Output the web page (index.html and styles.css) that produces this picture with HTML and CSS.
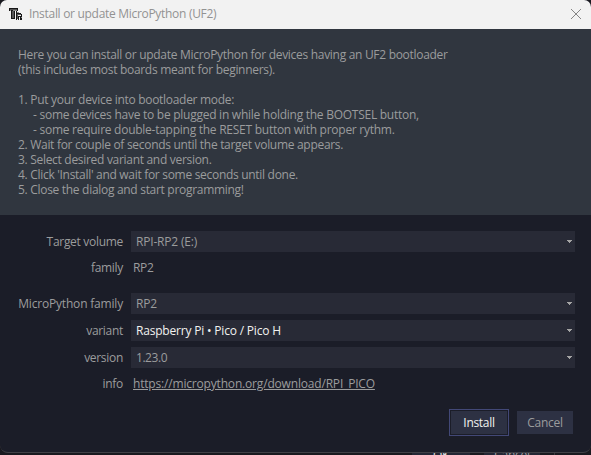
FILE: index.html
```html
<!DOCTYPE html>
<html lang="en">
<head>
<meta charset="utf-8">
<title>Install or update MicroPython (UF2)</title>
<link rel="stylesheet" href="styles.css">
</head>
<body>
<div class="behind">
  <div class="behind-button behind-ok">OK</div>
  <div class="behind-button">Cancel</div>
  <div class="behind-edge"></div>
</div>
<main class="dialog">
  <header class="titlebar">
    <svg class="logo" viewBox="0 0 14 14" shape-rendering="crispEdges">
      <path fill="#8d8d8d" d="M1 3h8v1H1zM5 3h1v9H5zM8 5h2v2H8zM9 9h2v1H9zM12 10h1v1h-1z"/>
      <path fill="#171717" d="M0 1h9v1H0zM0 2h1v2H0zM8 2h1v2H8zM2 3h1v9H2zM3 3h1v1H3zM2 11h4v1H2zM5 4h1v8H5zM7 4h1v9H7zM8 6h4v1H8zM12 7h1v3h-1zM9 9h3v1H9zM9 10h1v3H9zM11 10h1v3h-1zM12 11h1v2h-1z"/>
      <path fill="#555" d="M1 2h7v1H1zM3 4h2v7H3zM8 7h1v5H8zM9 7h3v1H9z"/>
    </svg>
    <h1 class="title">Install or update MicroPython (UF2)</h1>
    <svg class="close" viewBox="0 0 12 12"><path d="M1 1l10 10M11 1L1 11" stroke="#858585" fill="none"/></svg>
  </header>
  <section class="intro">
    <p>Here you can install or update MicroPython for devices having an UF2 bootloader</p>
    <p>(this includes most boards meant for beginners).</p>
    <p class="gap"></p>
    <p>1. Put your device into bootloader mode:</p>
    <p class="sub">- some devices have to be plugged in while holding the BOOTSEL button,</p>
    <p class="sub">- some require double-tapping the RESET button with proper rythm.</p>
    <p>2. Wait for couple of seconds until the target volume appears.</p>
    <p>3. Select desired variant and version.</p>
    <p>4. Click 'Install' and wait for some seconds until done.</p>
    <p>5. Close the dialog and start programming!</p>
  </section>
  <section class="form">
    <label>Target volume</label>
    <div class="select"><span>RPI-RP2 (E:)</span><svg class="arrow" viewBox="0 0 5 3" shape-rendering="crispEdges"><path d="M0 0h5v1H0zM1 1h3v1H1zM2 2h1v1H2z"/></svg></div>
    <label class="plain">family</label>
    <div class="value">RP2</div>
    <label class="wide">MicroPython family</label>
    <div class="select"><span>RP2</span><svg class="arrow" viewBox="0 0 5 3" shape-rendering="crispEdges"><path d="M0 0h5v1H0zM1 1h3v1H1zM2 2h1v1H2z"/></svg></div>
    <label>variant</label>
    <div class="select active"><span>Raspberry Pi • Pico / Pico H</span><svg class="arrow" viewBox="0 0 5 3" shape-rendering="crispEdges"><path d="M0 0h5v1H0zM1 1h3v1H1zM2 2h1v1H2z"/></svg></div>
    <label>version</label>
    <div class="select"><span class="number">1.23.0</span><svg class="arrow" viewBox="0 0 5 3" shape-rendering="crispEdges"><path d="M0 0h5v1H0zM1 1h3v1H1zM2 2h1v1H2z"/></svg></div>
    <label class="plain">info</label>
    <div class="value"><a class="link">https://micropython.org/download/RPI_PICO</a></div>
  </section>
  <footer class="actions">
    <button class="button primary">Install</button>
    <button class="button">Cancel</button>
  </footer>
</main>
</body>
</html>
```

FILE: styles.css
```css
* { box-sizing: border-box; }
body {
  margin: 0;
  width: 591px;
  height: 455px;
  overflow: hidden;
  position: relative;
  background: #19191f;
  color: #9b9c9d;
  font: 12px/15px "Open Sans", "Noto Sans", sans-serif;
  letter-spacing: -0.3px;
}
h1, p { margin: 0; font: inherit; white-space: nowrap; }
.dialog {
  position: relative;
  width: 591px;
  height: 453px;
  display: flex;
  flex-direction: column;
  background: #1b1d28;
  border-bottom: 1px solid #404046;
  border-radius: 7px 7px 8px 8px;
  overflow: hidden;
}
.titlebar {
  height: 29px;
  flex: none;
  display: flex;
  align-items: center;
  padding: 0 9px 2px;
  background: #f2f2f2;
  color: #929292;
}
.logo { width: 14px; height: 14px; }
.title { flex: 1; margin-left: 6px; }
.close { width: 12px; height: 12px; }
.intro {
  height: 186px;
  flex: none;
  padding: 18px 18px 0;
  background: #30363f;
}
.gap { height: 15px; }
.sub { padding-left: 15px; letter-spacing: -0.26px; }
.form {
  display: grid;
  grid-template-columns: 107px 444px;
  grid-template-rows: 21px 21px 29px 21px 21px 21px;
  gap: 6px 8px;
  padding: 16px 0 0 16px;
  align-items: center;
}
.form label { text-align: right; white-space: nowrap; }
.form .wide { letter-spacing: -0.19px; }
.form .wide, .form .wide + .select { margin-top: 8px; }
.select {
  height: 21px;
  display: flex;
  align-items: center;
  justify-content: space-between;
  padding: 0 3px 0 5px;
  background: #282a36;
  letter-spacing: -0.19px;
}
.number { letter-spacing: -0.45px; }
.active { color: #f2f2f0; }
.arrow { width: 5px; height: 3px; fill: #a4a4a4; }
.form .plain, .value { padding-bottom: 2px; }
.value { padding-left: 2px; }
.link { text-decoration: underline; letter-spacing: -0.18px; }
.actions {
  display: flex;
  justify-content: flex-end;
  gap: 6px;
  margin: auto 16px 16px 0;
}
.button {
  width: 60px;
  height: 27px;
  padding: 0;
  border: 2px solid #1b1d28;
  background: #2d3143;
  color: #9b9c9d;
  font: inherit;
  letter-spacing: inherit;
}
.primary {
  border: 1px solid #424877;
  box-shadow: inset 0 0 0 1px #1b1d28;
  color: #f2f2f0;
}
.behind {
  position: absolute;
  left: 412px;
  top: 447px;
  display: flex;
  gap: 14px;
}
.behind-button {
  width: 56px;
  height: 20px;
  background: #242735;
  text-align: center;
  line-height: 16px;
}
.behind-ok { width: 58px; color: #e0e0e0; }
.behind-edge { width: 1px; height: 20px; background: #38383c; }
```
